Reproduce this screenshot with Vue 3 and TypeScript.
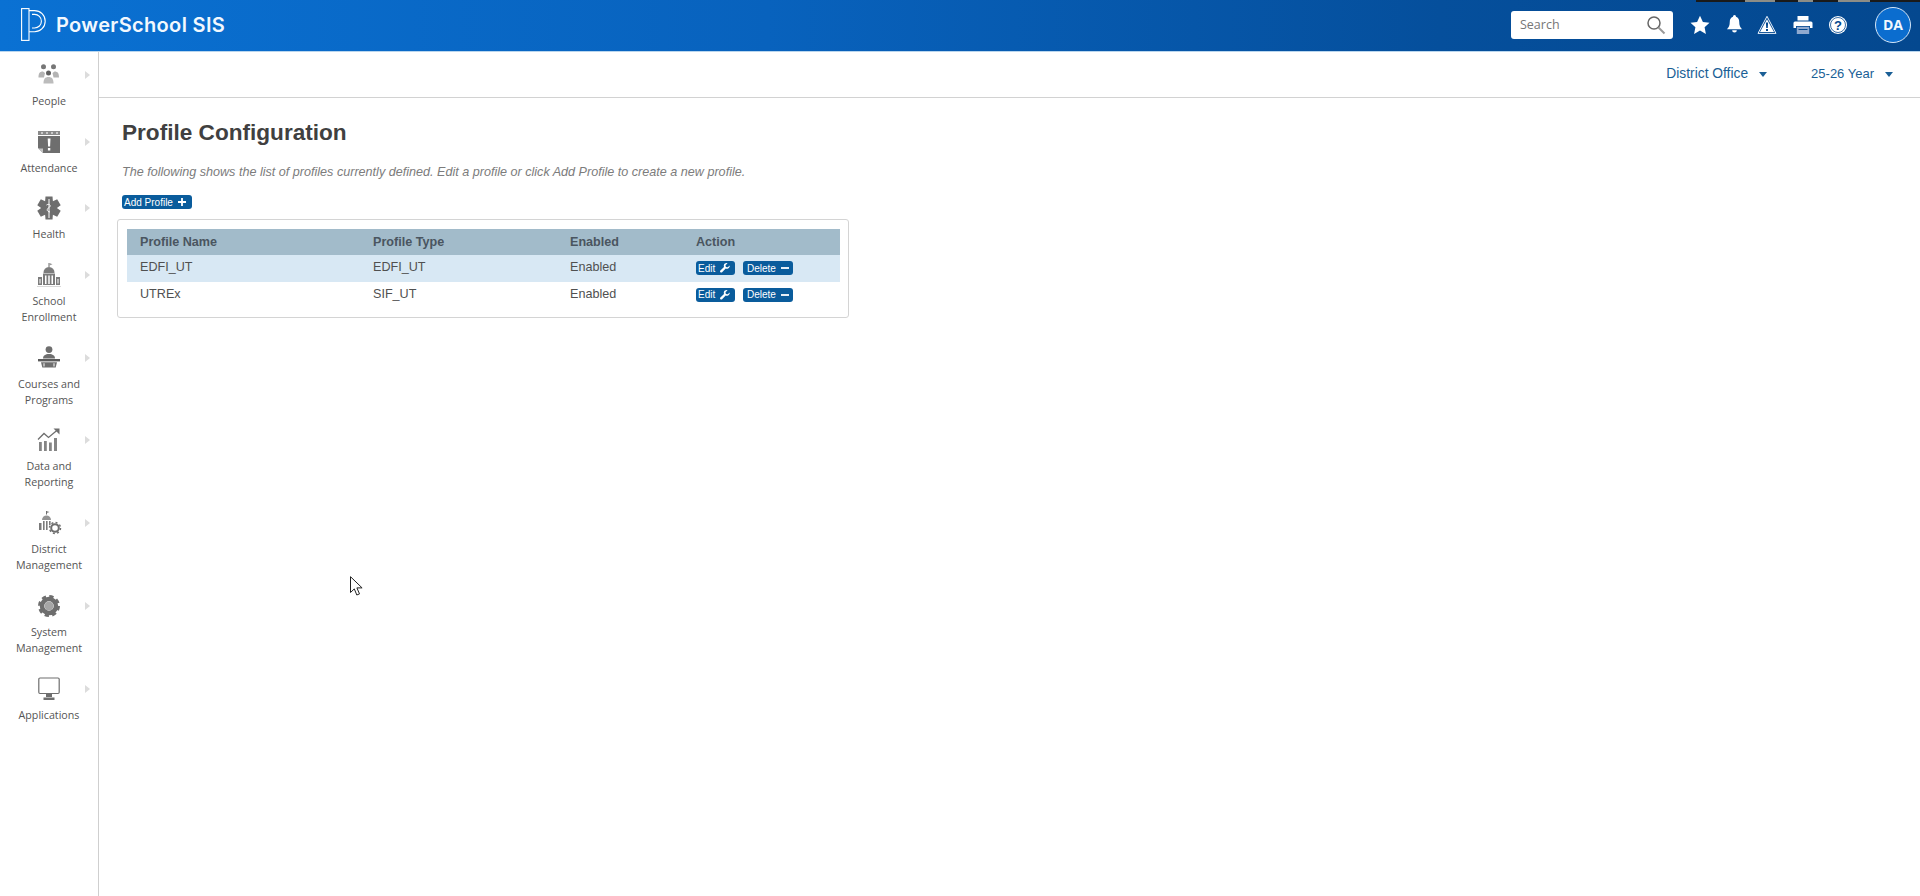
<script setup lang="ts">
interface NavItem { key: string; lines: string[] }
interface Row { name: string; type: string; enabled: string }

const navItems: NavItem[] = [
  { key: 'people', lines: ['People'] },
  { key: 'attendance', lines: ['Attendance'] },
  { key: 'health', lines: ['Health'] },
  { key: 'school', lines: ['School', 'Enrollment'] },
  { key: 'courses', lines: ['Courses and', 'Programs'] },
  { key: 'data', lines: ['Data and', 'Reporting'] },
  { key: 'district', lines: ['District', 'Management'] },
  { key: 'system', lines: ['System', 'Management'] },
  { key: 'apps', lines: ['Applications'] },
]

const rows: Row[] = [
  { name: 'EDFI_UT', type: 'EDFI_UT', enabled: 'Enabled' },
  { name: 'UTREx', type: 'SIF_UT', enabled: 'Enabled' },
]
</script>

<template>
  <div class="app">
    <header class="topbar">
      <div class="strip">
        <span class="s1"></span><span class="s2"></span><span class="s3"></span>
      </div>
      <div class="brand">
        <svg class="logo" viewBox="0 0 26 33" width="26" height="33" fill="none" stroke="#fff" stroke-width="1.1">
          <rect x="0.6" y="0.6" width="7.4" height="31.8" />
          <path d="M8 2.600h5.600a10.600 10.600 0 0 1 0 21.200H8" />
          <path d="M11 6.400h2.600a6.800 6.800 0 0 1 0 13.600H11" />
        </svg>
        <span class="brand-name">PowerSchool SIS</span>
      </div>
      <div class="tools">
        <label class="search">
          <span class="search-ph">Search</span>
          <svg viewBox="0 0 20 20" width="20" height="20" fill="none">
            <circle cx="8" cy="8" r="6" stroke="#666" stroke-width="1.5" />
            <path d="M12.500 12.500L18.500 18.500" stroke="#999" stroke-width="2" />
          </svg>
        </label>
        <svg class="t-star" viewBox="0 0 20 20" width="20" height="20"><path fill="#fff" d="M10 .8l2.900 6.100 6.600.8-4.900 4.600 1.300 6.600L10 15.600l-5.900 3.300 1.300-6.600L.5 7.700l6.600-.8z" /></svg>
        <svg class="t-bell" viewBox="0 0 18 20" width="17" height="19"><path fill="#fff" d="M9 0a1.600 1.600 0 0 1 1.600 1.700C13 2.400 14 4.600 14 7c0 4 1 6 3 8H1c2-2 3-4 3-8 0-2.400 1-4.600 3.400-5.300A1.600 1.600 0 0 1 9 0zM6.500 16h5a2.500 2.500 0 0 1-5 0z" /></svg>
        <svg class="t-warn" viewBox="0 0 20 20" width="20" height="20"><path fill="none" stroke="#e8f0fa" stroke-width="1" d="M10 1.300L19 18.400H1z" /><path fill="#fff" d="M10 4.200L17 17H3z" /><path fill="#04488f" d="M8.900 7.500h2.200l-.3 5.500H9.200zM9 14h2v2H9z" /></svg>
        <svg class="t-print" viewBox="0 0 20 20" width="20" height="20"><path fill="#fff" d="M4.500 1h11v4.500h-11z" /><path fill="#fff" d="M2 6.500h16A1.500 1.500 0 0 1 19.500 8v5H17v-2H3v2H.5V8A1.500 1.500 0 0 1 2 6.500z" /><path fill="#8fa9cf" d="M3.800 11.800h12.400V19H3.800z" /><path fill="#05498f" d="M5.500 14h9v1h-9z" /></svg>
        <svg class="t-help" viewBox="0 0 20 20" width="20" height="20"><circle cx="10" cy="10" r="9" fill="#fff" /><circle cx="10" cy="10" r="7.500" fill="none" stroke="#04488f" stroke-width=".8" /><text x="10" y="14.800" text-anchor="middle" class="help-q">?</text></svg>
        <div class="avatar">DA</div>
      </div>
    </header>

    <div class="body">
      <nav class="sidebar">
        <a v-for="item in navItems" :key="item.key" class="nav-item">
          <span class="nav-icon">
            <svg viewBox="0 0 28 24" width="28" height="24" fill="#6e6e6e">
              <template v-if="item.key === 'people'">
                <circle cx="8.500" cy="3.800" r="2.500" fill="#767676" /><circle cx="18.500" cy="3.800" r="2.500" fill="#767676" />
                <path fill="#b4b4b4" d="M3.500 14.500c0-4 1-6 4.500-6l2 1.500-1 4.500zM24 14.500c0-4-1-6-4.500-6l-2 1.500 1 4.500z" />
                <circle cx="13.500" cy="10" r="2.500" fill="#5f5f5f" />
                <path fill="#bcbcbc" d="M8.500 20.500c0-4.500 1.500-6.500 5-6.500s5 2 5 6.500z" />
              </template>
              <template v-else-if="item.key === 'attendance'">
                <path fill="#8a8a8a" d="M3 1h22v4H3z" />
                <path fill="#dedede" d="M6 2.200h2v1.600H6zM11 2.200h2v1.600h-2zM16 2.200h2v1.600h-2zM21 2.200h2v1.600h-2z" />
                <path d="M3 6h22v17H8l-5-5z" />
                <path fill="#c4c4c4" d="M3 18.500h5V23z" />
                <path fill="#fff" d="M12.700 8.500h2.800l-.4 8h-2zM12.900 18h2.400v2.600h-2.400z" />
              </template>
              <template v-else-if="item.key === 'health'">
                <g transform="translate(14 12)">
                  <path d="M-3.500-11.500h7L4.500 0h-9z" />
                  <path d="M-3.500-11.500h7L4.500 0h-9z" transform="rotate(60)" />
                  <path d="M-3.500-11.500h7L4.500 0h-9z" transform="rotate(120)" />
                  <path d="M-3.500-11.500h7L4.500 0h-9z" transform="rotate(180)" />
                  <path d="M-3.500-11.500h7L4.500 0h-9z" transform="rotate(240)" />
                  <path d="M-3.500-11.500h7L4.500 0h-9z" transform="rotate(300)" />
                  <path fill="none" stroke="#fff" stroke-width="1" d="M0-9V10M-2.500-3c3-2 5 1 2.500 2.500s-2.500 4 1 4.500" />
                </g>
              </template>
              <template v-else-if="item.key === 'school'">
                <path d="M13.500 0h1v4h-1z" /><path fill="#999" d="M14.500 0l3 1.300-3 1.300z" />
                <path fill="#7c7c7c" d="M14 4a5.500 5.500 0 0 1 5.500 6h-11A5.500 5.500 0 0 1 14 4z" />
                <path fill="#7c7c7c" d="M8 10.500h12V22H8z" />
                <path fill="#fff" d="M10 12.500h1.500V21H10zM13.250 12.500h1.500V21h-1.500zM16.500 12.500H18V21h-1.500z" />
                <path fill="#7c7c7c" d="M3 14h4v8H3zM21 14h4v8h-4z" />
                <path fill="#fff" d="M4.500 16h1v4.500h-1zM22.500 16h1v4.500h-1z" />
                <path fill="#cfcfcf" d="M2 23h24v.800H2z" />
              </template>
              <template v-else-if="item.key === 'courses'">
                <circle cx="14" cy="3.600" r="3.400" />
                <path d="M8 12.500c0-3 2.300-4.500 6-4.500s6 1.500 6 4.500z" />
                <path fill="#5a5a5a" d="M3 13h22v2.400H3z" />
                <path d="M6 16.300h16l-1.300 5.200H7.300z" />
                <path fill="#fff" d="M8.500 17.300h1v3.200h-1zM18.500 17.300h1v3.200h-1z" />
              </template>
              <template v-else-if="item.key === 'data'">
                <path d="M4 14h2.800v9H4zM9 13h2.800v10H9zM14 14.500h2.800V23H14zM19 10h3v13h-3z" fill="#858585" />
                <path fill="none" stroke="#6e6e6e" stroke-width="1.300" d="M3 11.500l6-6 4.500 4L23 1.500" />
                <path d="M18.500.5H24.500V6.500z" />
              </template>
              <template v-else-if="item.key === 'district'">
                <path d="M11 0h1v3.500h-1z" /><path fill="#999" d="M12 0l2.500 1.100L12 2.200z" />
                <path fill="#949494" d="M7 9a4.500 4.500 0 0 1 9 0z" />
                <path fill="#7a7a7a" d="M8 10h1.600v9H8zM11 10h1.600v9H11zM14 10h1.600v4H14zM4 12h2.500v7H4z" />
                <circle cx="20" cy="17" r="3.800" fill="none" stroke="#6e6e6e" stroke-width="2" />
                <circle cx="20" cy="17" r="5.500" fill="none" stroke="#6e6e6e" stroke-width="1.500" stroke-dasharray="2 2.300" />
              </template>
              <template v-else-if="item.key === 'system'">
                <circle cx="14" cy="12" r="7" fill="none" stroke="#6e6e6e" stroke-width="4.500" />
                <circle cx="14" cy="12" r="9.500" fill="none" stroke="#6e6e6e" stroke-width="3" stroke-dasharray="4.200 3.260" />
                <circle cx="14" cy="12" r="4.500" fill="#a6a6a6" />
              </template>
              <template v-else>
                <rect x="3.800" y="1" width="20.400" height="15.500" rx="1.200" fill="none" stroke="#6e6e6e" stroke-width="1.200" />
                <path d="M11 17h6v3h-6zM8.500 20.500h11V23h-11z" />
              </template>
            </svg>
            <i class="nav-arrow"></i>
          </span>
          <span class="nav-label">
            <span v-for="line in item.lines" :key="line" class="nav-line">{{ line }}</span>
          </span>
        </a>
      </nav>

      <main class="main">
        <div class="subbar">
          <button class="selector school-sel">District Office<i class="caret"></i></button>
          <button class="selector year-sel">25-26 Year<i class="caret"></i></button>
        </div>
        <section class="content">
          <h1 class="title">Profile Configuration</h1>
          <p class="intro">The following shows the list of profiles currently defined. Edit a profile or click Add Profile to create a new profile.</p>
          <a class="btn add-btn">Add Profile
            <svg viewBox="0 0 8 8" width="8" height="8"><path fill="#fff" d="M3.100 0h1.800v3.100H8v1.800H4.900V8H3.100V4.900H0V3.100h3.100z" /></svg>
          </a>
          <div class="box">
            <table class="grid">
              <colgroup>
                <col class="c1" /><col class="c2" /><col class="c3" /><col />
              </colgroup>
              <thead>
                <tr><th>Profile Name</th><th>Profile Type</th><th>Enabled</th><th>Action</th></tr>
              </thead>
              <tbody>
                <tr v-for="row in rows" :key="row.name">
                  <td>{{ row.name }}</td>
                  <td>{{ row.type }}</td>
                  <td>{{ row.enabled }}</td>
                  <td>
                    <div class="actions">
                      <a class="btn edit-btn">Edit
                        <svg viewBox="0 0 10 10" width="10" height="10"><path fill="#fff" d="M9.800 2.400L7.700 4.300 5.900 3.900 5.500 2.200 7.500.2C6-.2 4.300.5 3.900 2c-.2.700-.1 1.300.1 1.900L.4 7.500a1.200 1.200 0 0 0 1.700 1.700l3.600-3.600c.6.200 1.300.3 1.900.1 1.500-.5 2.500-2.200 2.200-3.300z" /></svg>
                      </a>
                      <a class="btn del-btn">Delete
                        <svg viewBox="0 0 8 8" width="8" height="8"><path fill="#fff" d="M0 3.100h8v1.800H0z" /></svg>
                      </a>
                    </div>
                  </td>
                </tr>
              </tbody>
            </table>
          </div>
        </section>
      </main>
    </div>

    <svg class="cursor" viewBox="0 0 13 21" width="13" height="21">
      <path fill="#fff" stroke="#222" stroke-width="1" d="M.5.700v15.800l3.800-3.600 2.500 6.100 2.700-1.100-2.600-6h5.200z" />
    </svg>
  </div>
</template>

<style>
html, body { margin: 0; background: #fff; overflow: hidden; }
</style>

<style scoped>
.app {
  position: relative;
  height: 896px;
  display: flex;
  flex-direction: column;
  font-family: "Liberation Sans", Arial, sans-serif;
  color: #444;
}
.topbar {
  position: relative;
  height: 49px;
  padding-bottom: 2px;
  flex: none;
  display: flex;
  align-items: center;
  justify-content: space-between;
  background: linear-gradient(90deg, #0a71d3 0%, #0862bd 40%, #054f9c 75%, #04488f 100%);
  border-bottom: 1px solid #b9d6ee;
}
.strip {
  position: absolute;
  top: 0;
  right: 0;
  width: 224px;
  height: 2px;
  background: #1a1a1a;
}
.strip span { position: absolute; top: 0; height: 2px; background: #8d8d86; }
.s1 { left: 49px; width: 30px; }
.s2 { left: 102px; width: 15px; }
.s3 { left: 142px; width: 32px; }
.brand { display: flex; align-items: center; margin-left: 21px; }
.logo { margin-right: 9px; }
.brand-name {
  font-family: Inter, "Liberation Sans", sans-serif;
  font-weight: 600;
  font-size: 20px;
  letter-spacing: .35px;
  color: #f2f8fe;
}
.tools { display: flex; align-items: center; margin-right: 9px; }
.search {
  width: 162px;
  height: 28px;
  margin-right: 17px;
  padding: 0 7px 0 9px;
  box-sizing: border-box;
  display: flex;
  align-items: center;
  justify-content: space-between;
  background: #fff;
  border-radius: 3px;
}
.search-ph { font-family: "Open Sans", sans-serif; font-size: 12.500px; color: #767676; }
.t-star { margin-right: 16px; }
.t-bell { margin-right: 14px; }
.t-warn { margin-right: 16px; }
.t-print { margin-right: 15px; }
.t-help { margin-right: 27px; }
.help-q { font-family: "Liberation Sans", sans-serif; font-size: 13px; font-weight: 700; fill: #04488f; }
.avatar {
  width: 36px;
  height: 36px;
  box-sizing: border-box;
  border: 1px solid #d5e6f7;
  border-radius: 50%;
  background: #0b6dcf;
  color: #f2f8fe;
  font-family: "Open Sans", sans-serif;
  font-weight: 700;
  font-size: 14px;
  display: flex;
  align-items: center;
  justify-content: center;
}
.body { flex: 1; display: flex; min-height: 0; }
.sidebar {
  width: 98px;
  flex: none;
  border-right: 1px solid #cfcfcf;
  font-family: "Open Sans", sans-serif;
}
.nav-item { display: block; padding: 11px 0 9.700px; text-align: center; }
.nav-icon { position: relative; display: flex; justify-content: center; height: 24px; margin-bottom: 6px; }
.nav-arrow {
  position: absolute;
  left: 85px;
  top: 8px;
  border-left: 5px solid #dcdcdc;
  border-top: 4px solid transparent;
  border-bottom: 4px solid transparent;
}
.nav-label { display: block; }
.nav-line { display: block; font-size: 10.700px; line-height: 16px; color: #555; }
.main { flex: 1; min-width: 0; }
.subbar {
  height: 46px;
  box-sizing: border-box;
  border-bottom: 1px solid #d2d2d2;
  display: flex;
  justify-content: flex-end;
  align-items: center;
  padding: 0 27px 3px 0;
}
.selector {
  padding: 0;
  border: 0;
  background: none;
  display: flex;
  align-items: center;
  font-family: "Liberation Sans", sans-serif;
  font-size: 13.800px;
  color: #1a5f96;
}
.year-sel { font-size: 13px; }
.school-sel { margin-right: 44px; }
.caret {
  margin-left: 11px;
  margin-top: 2px;
  border-top: 5px solid #1a5f96;
  border-left: 4.500px solid transparent;
  border-right: 4.500px solid transparent;
}
.content { padding: 22px 0 0 23px; }
.title {
  margin: 0;
  font-size: 22.600px;
  line-height: 26px;
  font-weight: 700;
  color: #404040;
}
.intro {
  margin: 18px 0 0;
  font-size: 12.600px;
  line-height: 16px;
  font-style: italic;
  color: #7c7c7c;
}
.btn {
  display: inline-flex;
  align-items: center;
  box-sizing: border-box;
  height: 14px;
  border-radius: 3px;
  background: #0a5c9c;
  color: #fff;
  font-size: 10px;
  white-space: nowrap;
}
.add-btn { width: 70px; margin-top: 15px; padding-left: 2px; gap: 5px; display: flex; }
.box {
  width: 732px;
  height: 99px;
  box-sizing: border-box;
  margin: 10px 0 0 -5px;
  padding: 9px;
  border: 1px solid #d4d4d4;
  border-radius: 3px;
}
.grid { width: 713px; border-collapse: collapse; table-layout: fixed; font-size: 12.600px; }
.c1 { width: 233px; }
.c2 { width: 197px; }
.c3 { width: 126px; }
.grid th {
  height: 26px;
  padding: 0 0 0 13px;
  text-align: left;
  font-weight: 700;
  color: #4a5560;
  background: #a2bbca;
}
.grid td {
  box-sizing: border-box;
  height: 26.500px;
  padding: 0 0 2px 13px;
  color: #505050;
}
.grid tbody tr:first-child td { background: #d8e8f4; }
.actions { display: flex; gap: 8px; margin-top: 2px; }
.edit-btn { width: 39px; padding-left: 2px; gap: 5px; }
.del-btn { width: 50px; padding-left: 4px; gap: 5px; }
.cursor { position: absolute; left: 350px; top: 576px; }
</style>
